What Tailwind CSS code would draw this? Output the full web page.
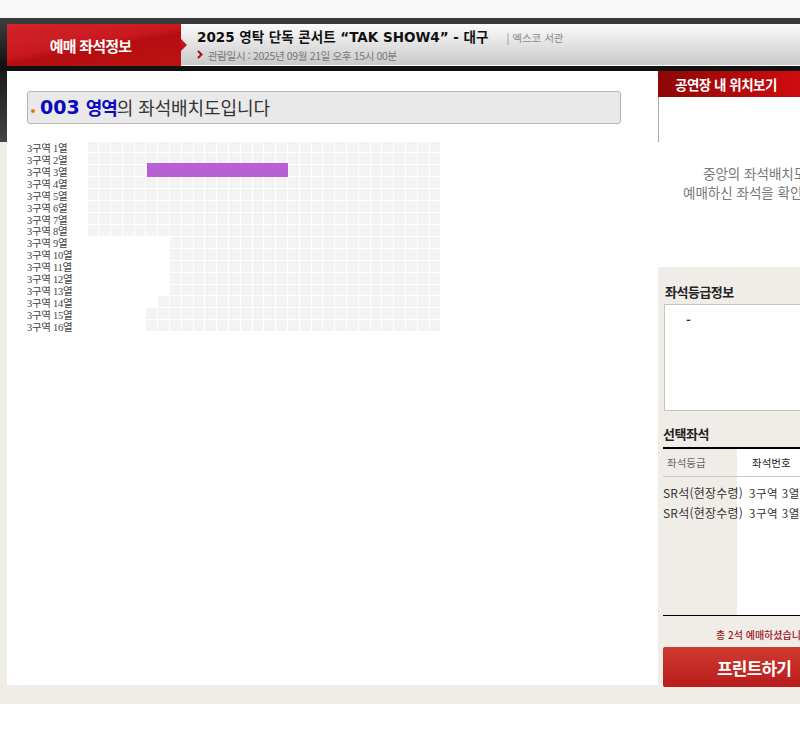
<!DOCTYPE html>
<html lang="ko">
<head>
<meta charset="utf-8">
<script src="https://cdn.jsdelivr.net/npm/@tailwindcss/browser@4"></script>
</head>
<body class="bg-white overflow-hidden font-['Noto_Sans_CJK_KR',sans-serif]">
<div class="w-[800px] h-[735px] flex flex-col overflow-hidden">
  <div class="h-[18px] bg-[#f8f8f8] shrink-0"></div>
  <header class="h-[53px] shrink-0 flex bg-[linear-gradient(to_bottom,#3a3a3a_0px,#3a3a3a_5px,#111_48px,#111_53px)]">
    <div class="w-[7px] shrink-0"></div>
    <div class="flex flex-1 h-[42px] mt-[6px]">
      <div class="w-[174px] shrink-0 relative flex items-center justify-center pr-[7px] bg-[linear-gradient(170deg,#d4232a_0%,#c81a1e_45%,#b50e10_55%,#bd1214_100%)]">
        <span class="text-white font-bold text-[15px] tracking-[-0.8px] leading-none">예매 좌석정보</span>
        <span class="absolute left-[174px] top-[15px] w-0 h-0 border-y-[6px] border-y-transparent border-l-[6px] border-l-[#c0161a]"></span>
      </div>
      <div class="flex-1 pl-[16px] bg-[linear-gradient(to_bottom,#fbfbfb,#c9c9c9)] border-b border-white overflow-hidden">
        <div class="flex items-center h-[23px] mt-[2px] whitespace-nowrap">
          <span class="font-bold text-[13.5px] text-[#111] font-['DejaVu_Sans','Noto_Sans_CJK_KR',sans-serif]">2025 영탁 단독 콘서트 “TAK SHOW4” - 대구</span>
          <span class="ml-[18px] text-[10.5px] text-[#888]">| 엑스코 서관</span>
        </div>
        <div class="flex items-center h-[14px] whitespace-nowrap">
          <svg class="w-[6px] h-[9px] mr-[5px] -mt-[4px]" viewBox="0 0 6 9"><path d="M1 1l3.5 3.5L1 8" fill="none" stroke="#a01014" stroke-width="2"/></svg>
          <span class="text-[10.5px] text-[#777] tracking-[-0.35px]">관람일시 : 2025년 09월 21일 오후 15시 00분</span>
        </div>
      </div>
    </div>
  </header>
  <main class="flex h-[633px] shrink-0 bg-[#f0ede9]">
    <div class="w-[7px] shrink-0 flex flex-col">
      <div class="h-[71px] bg-[linear-gradient(to_bottom,#1a1a1a,#444)]"></div>
    </div>
    <section class="w-[651px] h-[614px] shrink-0 bg-white pl-[20px] pt-[20px]">
      <h1 class="w-[594px] h-[33px] flex items-center bg-[#e9e9e9] border border-[#b5b5b5] rounded-[3px] pl-[3px]">
        <span class="w-[4px] h-[4px] rounded-full bg-[#e8760c] mt-[6px] mr-[5px]"></span>
        <span class="font-bold text-[19px] text-[#0a0ac0] font-['DejaVu_Sans','Noto_Sans_CJK_KR',sans-serif]">003</span>
        <span class="font-bold text-[18px] text-[#0a0ac0] ml-[6px] tracking-[-1px]">영역</span>
        <span class="text-[18px] text-[#333] tracking-[-0.1px]">의 좌석배치도입니다</span>
      </h1>
      <div class="flex mt-[17px]">
        <div id="labels" class="w-[60px] shrink-0 flex flex-col pt-[2px] text-[10.5px] text-[#444] tracking-[-0.3px] font-['Liberation_Serif','Noto_Sans_CJK_KR',serif]"></div>
        <div id="seats" class="relative grid grid-cols-[repeat(30,11.8px)] auto-rows-[11.93px]"></div>
      </div>
    </section>
    <aside class="w-[142px] shrink-0 overflow-hidden">
      <div class="h-[26px] bg-[linear-gradient(to_right,#8e0606,#cf0c0f)] flex items-center pl-[17px]">
        <span class="text-white font-bold text-[13.5px] tracking-[-0.5px] whitespace-nowrap">공연장 내 위치보기</span>
      </div>
      <div class="h-[170px] bg-white text-[13.5px] leading-[19px] text-[#777] whitespace-nowrap relative pt-[67px]">
        <span class="absolute left-0 top-0 w-px h-[45px] bg-[#aaa]"></span>
        <div class="pl-[45px]">중앙의 좌석배치도</div>
        <div class="pl-[25px]">예매하신 좌석을 확인</div>
      </div>
      <div class="pl-[7px] pt-[16px] text-[13px] font-bold text-[#222] tracking-[-0.5px] leading-[18px]">좌석등급정보</div>
      <div class="ml-[6px] mt-[3px] w-[160px] h-[107px] bg-white border border-[#c4c4c4] pl-[21px] pt-[5px] text-[13px] text-[#333] font-bold leading-[20px]">-</div>
      <div class="pl-[5px] pt-[14px] pb-[4px] text-[13px] font-bold text-[#222] tracking-[-0.5px] leading-[18px]">선택좌석</div>
      <div class="ml-[5px] border-t-2 border-black">
        <div class="flex h-[166px] whitespace-nowrap">
          <div class="w-[74px] shrink-0 relative z-10 text-[12px] text-[#333]">
            <div class="h-[28px] flex items-center pl-[4px] text-[10.5px] text-[#666] border-b border-[#c8c8c8]">좌석등급</div>
            <div class="pt-[6px] leading-[20px] tracking-[0.2px]">SR석(현장수령)<br>SR석(현장수령)</div>
          </div>
          <div class="w-[80px] shrink-0 bg-white text-[11.5px] text-[#333]">
            <div class="h-[28px] flex items-center pl-[15px] text-[10.5px] text-[#222] border-b border-[#c8c8c8]">좌석번호</div>
            <div class="pt-[6px] pl-[12px] leading-[20px] tracking-[0.5px]">3구역 3열<br>3구역 3열</div>
          </div>
        </div>
        <div class="border-t border-black"></div>
      </div>
      <div class="pl-[58px] pt-[11px] h-[31px] text-[10px] font-medium text-[#a0161a] leading-[16px] whitespace-nowrap">총 2석 예매하셨습니다</div>
      <div class="ml-[5px] w-[160px] h-[40px] rounded-[2px] bg-[linear-gradient(to_bottom,#d03a30,#b81c1c)] flex items-center pl-[54px]">
        <span class="text-white font-bold text-[17px] tracking-[-0.8px] leading-none whitespace-nowrap">프린트하기</span>
      </div>
    </aside>
  </main>
</div>
<script>
var labels=document.getElementById('labels'),seats=document.getElementById('seats');
var starts=[0,0,0,0,0,0,0,0,7,7,7,7,7,6,5,5];
for(var r=0;r<16;r++){
  var l=document.createElement('div');
  l.className='h-[11.93px] leading-[11.93px] whitespace-nowrap';
  l.textContent='3구역 '+(r+1)+'열';
  labels.appendChild(l);
  for(var c=0;c<30;c++){
    var s=document.createElement('div');
    s.className=c<starts[r]?'m-[0.5px]':'m-[0.5px] bg-[#f3f3f3]';
    seats.appendChild(s);
  }
}
var p=document.createElement('div');
p.className='absolute left-[60px] top-[22px] w-[141px] h-[14px] bg-[#b95fd6]';
seats.appendChild(p);
</script>
</body>
</html>
